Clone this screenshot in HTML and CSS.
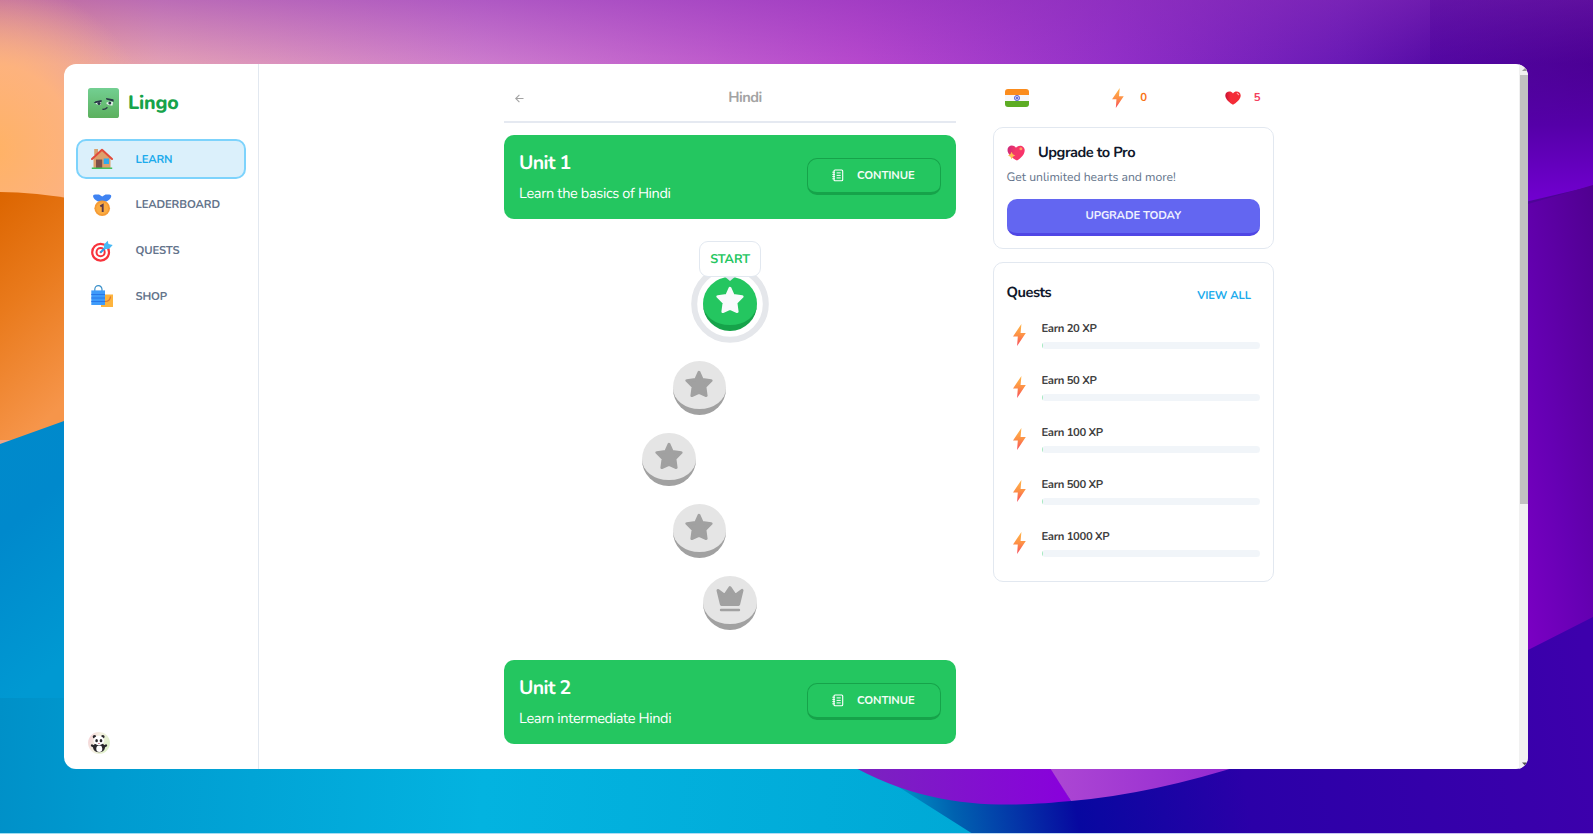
FILE: index.html
```html
<!DOCTYPE html>
<html lang="en">
<head>
<meta charset="utf-8">
<title>Lingo</title>
<link rel="stylesheet" href="styles.css">
</head>
<body>
<svg class="wallpaper" viewBox="0 0 1593 834" preserveAspectRatio="none" aria-hidden="true">
  <defs>
    <linearGradient id="sky"><stop offset="0" stop-color="#f0a585"/><stop offset=".1" stop-color="#e3a0b4"/><stop offset=".3" stop-color="#cd7ccd"/><stop offset=".54" stop-color="#b648cd"/><stop offset=".7" stop-color="#922fc8"/><stop offset=".84" stop-color="#6a1ab6"/><stop offset=".9" stop-color="#560ba6"/><stop offset="1" stop-color="#490090"/></linearGradient>
    <linearGradient id="mist" x2="0" y2="1"><stop offset="0" stop-color="#8b2fb8" stop-opacity=".45"/><stop offset="1" stop-color="#8b2fb8" stop-opacity="0"/></linearGradient>
    <radialGradient id="glow" gradientUnits="userSpaceOnUse" cx="-10" cy="150" r="170"><stop offset="0" stop-color="#ffb264"/><stop offset=".5" stop-color="#ffb47c" stop-opacity=".9"/><stop offset="1" stop-color="#f0ac9c" stop-opacity="0"/></radialGradient>
    <linearGradient id="orange" x1="0" y1="0" x2=".3" y2="1"><stop offset="0" stop-color="#dc6500"/><stop offset=".45" stop-color="#e97a1c"/><stop offset="1" stop-color="#f6954a"/></linearGradient>
    <linearGradient id="sea" gradientUnits="userSpaceOnUse" x1="0" y1="700" x2="973" y2="760"><stop offset="0" stop-color="#0090c8"/><stop offset=".12" stop-color="#009bd0"/><stop offset=".5" stop-color="#03b3e0"/><stop offset="1" stop-color="#00a9d6"/></linearGradient>
    <linearGradient id="seaLeft" x1="0" y1="0" x2=".25" y2="1"><stop offset="0" stop-color="#008acb"/><stop offset=".4" stop-color="#0089cc"/><stop offset="1" stop-color="#0099d2"/></linearGradient>
    <linearGradient id="violet" x2="0" y2="1"><stop offset="0" stop-color="#4b0096" stop-opacity=".3"/><stop offset=".3" stop-color="#4f009c" stop-opacity=".4"/><stop offset=".6" stop-color="#5500a8"/><stop offset="1" stop-color="#7400d4"/></linearGradient>
    <linearGradient id="plum" x1="1" y1="0" x2="0" y2="1"><stop offset="0" stop-color="#500090"/><stop offset=".5" stop-color="#6600b4"/><stop offset="1" stop-color="#8500cb"/></linearGradient>
    <linearGradient id="indigo" gradientUnits="userSpaceOnUse" x1="890" y1="820" x2="1593" y2="700"><stop offset="0" stop-color="#00a0cc"/><stop offset=".09" stop-color="#0062b0"/><stop offset=".26" stop-color="#0708a0"/><stop offset=".5" stop-color="#2b00a8"/><stop offset="1" stop-color="#3d00ac"/></linearGradient>
    <linearGradient id="leafA"><stop offset="0" stop-color="#7926bd"/><stop offset="1" stop-color="#8900dc"/></linearGradient>
    <linearGradient id="leafB"><stop offset="0" stop-color="#ad48d3"/><stop offset="1" stop-color="#9124d1"/></linearGradient>
    <linearGradient id="edge"><stop offset="0" stop-color="#9fdcef"/><stop offset=".6" stop-color="#b9dcf4"/><stop offset="1" stop-color="#cfb4ed"/></linearGradient>
  </defs>
  <rect width="1593" height="834" fill="url(#sky)"/>
  <rect width="1593" height="64" fill="url(#mist)"/>
  <rect width="300" height="320" fill="url(#glow)"/>
  <path d="M1430 0H1593V186L1500 208L1430 150Z" fill="url(#violet)"/>
  <path d="M0 192Q34 192 80 200V440H0Z" fill="url(#orange)"/>
  <path d="M1500 212L1528 204Q1570 192 1593 185V625L1500 665Z" fill="url(#plum)"/>
  <path d="M0 690H1100V834H0Z" fill="url(#sea)"/>
  <path d="M0 444L64 421L80 415V698H0Z" fill="url(#seaLeft)"/>
  <path d="M856 760L973 834H1593V617L1528 650L1240 740Z" fill="url(#indigo)"/>
  <path d="M842 760C930 814 1015 806 1071 801L1047 760Z" fill="url(#leafA)"/>
  <path d="M1045 760L1071 801Q1155 794 1258 760Z" fill="url(#leafB)"/>
  <rect y="833" width="1593" height="1" fill="url(#edge)"/>
</svg>

<svg class="sprites" aria-hidden="true">
  <defs>
    <linearGradient id="boltFill" x2="0" y2="1"><stop offset="0" stop-color="#ffb649"/><stop offset=".5" stop-color="#fd9146"/><stop offset="1" stop-color="#f74a5c"/></linearGradient>
    <symbol id="bolt" viewBox="0 0 13 22"><path d="M8.4 0L0 12.4H4.8L4.1 22L12.8 9.1H7.6Z" fill="url(#boltFill)"/></symbol>
    <symbol id="star" viewBox="0 0 28 28"><path d="M14 2.2L17.3 9.5L26.2 10.6L20 16.8L21.2 25.6L14 22.4L6.8 25.6L8 16.8L1.8 10.6L10.7 9.5Z" fill="currentColor" stroke="currentColor" stroke-width="2.8" stroke-linejoin="round"/></symbol>
    <symbol id="crown" viewBox="0 0 28 28"><path d="M2 5.4L8.8 10.4L14 2.7L19.2 10.4L26 5.4L22.6 19.4H5.4Z" fill="currentColor" stroke="currentColor" stroke-width="3" stroke-linejoin="round"/><path d="M5 25H23" stroke="currentColor" stroke-width="2.4" stroke-linecap="round"/></symbol>
    <symbol id="notebook" viewBox="0 0 12 13"><g fill="none" stroke="#fff" stroke-linecap="round"><rect x="2" y="1" width="8.7" height="10.8" rx="1" stroke-width="1.1"/><path d="M.7 3.2H2.6M.7 5.4H2.6M.7 7.6H2.6M.7 9.8H2.6M5 3.9H8.3M5 6.4H8.3M5 8.9H8.3" stroke-width="1"/></g></symbol>
  </defs>
</svg>

<div class="window">
  <aside class="sidebar">
    <div class="brand">
      <svg class="brand-logo" viewBox="0 0 31 30"><defs><linearGradient id="lg" x2="0" y2="1"><stop offset="0" stop-color="#73cf92"/><stop offset="1" stop-color="#5cb05e"/></linearGradient></defs><rect width="31" height="30" rx="2.6" fill="url(#lg)"/><path d="M7 14.5Q10 12.6 13 13.8L12.7 17H10Q8 16.4 7 14.5Z" fill="#e9f3ee"/><path d="M18 15Q22 12.7 25 14L24.5 17.5Q20 18 18 15Z" fill="#e9f3ee"/><g fill="#293747"><circle cx="11" cy="15.5" r="1.6"/><circle cx="21.8" cy="15" r="1.5"/><path d="M5.7 15L7.5 13.3L13.6 12.1V14L8 15ZM18 10L25.4 11.3L25.8 13.8L18.3 11.6Z"/></g><path d="M15 21.3Q17.2 21.6 19 19.8" fill="none" stroke="#293747" stroke-width="1.4" stroke-linecap="round"/></svg>
      <span class="brand-name">Lingo</span>
    </div>
    <nav class="nav">
      <a class="nav-item active">
        <svg class="nav-icon" viewBox="0 0 22 22"><path d="M3.2 1H7V7H3.2Z" fill="#d9a06d"/><path d="M2.5 10L11 2L19.5 10V20H2.5Z" fill="#dda06c"/><path d="M1 11L11 1.8L21 11" fill="none" stroke="#e04b3c" stroke-width="2" stroke-linecap="round" stroke-linejoin="round"/><path d="M5 11.5H11.2V20H5Z" fill="#7e5049"/><path d="M12.7 10.5H18V16H12.7Z" fill="#2daaf0"/><path d="M.8 19.5H21.2V21H.8Z" fill="#43c05b"/></svg>
        <span>LEARN</span></a>
      <a class="nav-item">
        <svg class="nav-icon" viewBox="0 0 22 22"><path d="M2 2Q2 .4 4 .4H8L11.2 2.6L14.5 .4H18.3Q20.3 .4 20.3 2Q20 5 15.5 7.5H7Q2.3 5 2 2Z" fill="#3f83f2"/><circle cx="11.2" cy="14.2" r="7.8" fill="#f59b35"/><circle cx="11.2" cy="14.2" r="6" fill="#fbac42"/><path d="M9.3 12.4L11.7 10.9V18" fill="none" stroke="#5b3b4b" stroke-width="1.9"/></svg>
        <span>LEADERBOARD</span></a>
      <a class="nav-item">
        <svg class="nav-icon" viewBox="0 0 22 22"><circle cx="9.6" cy="12.2" r="8.4" fill="#fff" stroke="#f8333c" stroke-width="2.2"/><circle cx="9.6" cy="12.2" r="4.1" fill="#fff" stroke="#f8333c" stroke-width="2"/><circle cx="9.6" cy="12.2" r="1" fill="#f8333c"/><path d="M9.5 12.5L16 6" stroke="#2a9fe8" stroke-width="2"/><path d="M12.8 8.8L13 4.5L16.7 .8L17.5 3.9L21.7 5L18.3 8.8L14 9.3Z" fill="#49b9f5"/></svg>
        <span>QUESTS</span></a>
      <a class="nav-item">
        <svg class="nav-icon" viewBox="0 0 22 22"><path d="M3.8 7V4.5A3.6 3.9 0 0 1 11 4.5V7" fill="none" stroke="#398fc9" stroke-width="1.2"/><path d="M14 9.5H22V22H10V20H14Z" fill="#fdb43e"/><path d="M.3 5.4H14V20H.3Z" fill="#3e9bfa"/><path d="M.3 9.5H14M.3 13H14M.3 16.5H14" stroke="#2777e8"/><path d="M14 16.5Q19 16.5 19.5 11.5" fill="none" stroke="#d97536" stroke-width="1.2"/></svg>
        <span>SHOP</span></a>
    </nav>
    <svg class="avatar" viewBox="0 0 22 22"><defs><linearGradient id="av" y2=".4"><stop offset="0" stop-color="#f5ccd4"/><stop offset=".5" stop-color="#f4f0e2"/><stop offset="1" stop-color="#dff0ca"/></linearGradient></defs><circle cx="11" cy="11" r="10.9" fill="url(#av)"/><ellipse cx="11" cy="15.5" rx="6" ry="4.8" fill="#29272b"/><ellipse cx="11.3" cy="16.8" rx="3" ry="3.2" fill="#fff"/><circle cx="6.5" cy="4.7" r="1.8" fill="#29272b"/><circle cx="14.8" cy="4.7" r="1.8" fill="#29272b"/><ellipse cx="10.8" cy="8.5" rx="5.3" ry="4.7" fill="#fff"/><ellipse cx="8.6" cy="8.7" rx="1.3" ry="1.6" fill="#29272b"/><ellipse cx="13" cy="8.7" rx="1.3" ry="1.6" fill="#29272b"/><path d="M9.8 11H12L11 12Z" fill="#a52d4b"/><path d="M4 13.5L7 15M18 13.5L15 15" stroke="#29272b" stroke-width="2.3" stroke-linecap="round"/></svg>
  </aside>

  <main class="main">
    <section class="feed">
      <header class="feed-head">
        <svg class="back" viewBox="0 0 9 9"><path d="M8.5 4.5H.8M4.4 .8L.7 4.5L4.4 8.2" fill="none" stroke="#a3a3a3" stroke-width="1.1"/></svg>
        <h1>Hindi</h1>
      </header>
      <div class="unit">
        <div><h2>Unit 1</h2><p>Learn the basics of Hindi</p></div>
        <button class="continue"><svg><use href="#notebook"/></svg><span>CONTINUE</span></button>
      </div>
      <div class="path">
        <div class="lesson current">
          <svg class="ring" viewBox="0 0 78 78"><circle cx="39" cy="39" r="35.8" fill="none" stroke="#e5e7eb" stroke-width="6"/></svg>
          <div class="disc"><svg><use href="#star"/></svg></div>
          <div class="tip">START</div>
        </div>
        <div class="lesson left-one"><div class="disc"><svg><use href="#star"/></svg></div></div>
        <div class="lesson left-two"><div class="disc"><svg><use href="#star"/></svg></div></div>
        <div class="lesson left-one"><div class="disc"><svg><use href="#star"/></svg></div></div>
        <div class="lesson"><div class="disc"><svg><use href="#crown"/></svg></div></div>
      </div>
      <div class="unit">
        <div><h2>Unit 2</h2><p>Learn intermediate Hindi</p></div>
        <button class="continue"><svg><use href="#notebook"/></svg><span>CONTINUE</span></button>
      </div>
    </section>

    <section class="side">
      <div class="stats">
        <svg class="flag" viewBox="0 0 24 18"><defs><clipPath id="fc"><rect width="24" height="18" rx="3"/></clipPath></defs><g clip-path="url(#fc)"><rect width="24" height="18" fill="#f6f7fa"/><rect width="24" height="6" fill="#fb8c1d"/><rect y="12" width="24" height="6" fill="#5dac24"/></g><circle cx="12" cy="9" r="2.6" fill="#dfe2fb" stroke="#4753cf" stroke-width=".8"/><path d="M9.8 9H14.2M12 6.8V11.2M10.5 7.5L13.5 10.5M13.5 7.5L10.5 10.5" stroke="#4753cf" stroke-width=".4"/><circle cx="12" cy="9" r=".8" fill="#4753cf"/></svg>
        <div class="stat xp"><svg class="bolt-sm"><use href="#bolt"/></svg><span>0</span></div>
        <div class="stat hp"><svg class="heart" viewBox="0 0 16 14"><defs><linearGradient id="hr"><stop offset="0" stop-color="#c70f34"/><stop offset=".35" stop-color="#f52c38"/><stop offset="1" stop-color="#f22c35"/></linearGradient></defs><path d="M8 13.8C5 12 .3 8.4 .3 4.5C.3 1 5.5-1.2 8 2.6C10.5-1.2 15.7 1 15.7 4.5C15.7 8.4 11 12 8 13.8Z" fill="url(#hr)"/><path d="M12.3 2.3L13.6 3.6" stroke="#ff9fa8" stroke-width="1.2" stroke-linecap="round"/></svg><span>5</span></div>
      </div>
      <div class="card pro">
        <div class="pro-title"><svg viewBox="0 0 18 16"><defs><linearGradient id="pk" x2="1" y2=".2"><stop offset="0" stop-color="#c9277c"/><stop offset=".5" stop-color="#f43768"/><stop offset="1" stop-color="#f9336a"/></linearGradient></defs><path d="M10 15.6C6 13.5 .5 9.5 .5 5C.5 .7 6-1.2 9 2.8C12-1.2 17.7 .8 17.7 5.2C17.7 9.5 13.5 13.5 10 15.6Z" fill="url(#pk)"/><path d="M4.6 6.8L5.8 9.2L8.2 10.5L5.8 11.8L4.6 14.2L3.4 11.8L1 10.5L3.4 9.2Z" fill="#ffbd52"/><circle cx="13.9" cy="3.8" r="1.5" fill="#ff9b65"/></svg><h3>Upgrade to Pro</h3></div>
        <p>Get unlimited hearts and more!</p>
        <button class="upgrade">UPGRADE TODAY</button>
      </div>
      <div class="card quests">
        <div class="quests-head"><h3>Quests</h3><a>VIEW ALL</a></div>
        <div class="quest"><svg><use href="#bolt"/></svg><div><span>Earn 20 XP</span><div class="bar"></div></div></div>
        <div class="quest"><svg><use href="#bolt"/></svg><div><span>Earn 50 XP</span><div class="bar"></div></div></div>
        <div class="quest"><svg><use href="#bolt"/></svg><div><span>Earn 100 XP</span><div class="bar"></div></div></div>
        <div class="quest"><svg><use href="#bolt"/></svg><div><span>Earn 500 XP</span><div class="bar"></div></div></div>
        <div class="quest"><svg><use href="#bolt"/></svg><div><span>Earn 1000 XP</span><div class="bar"></div></div></div>
      </div>
    </section>
  </main>
  <div class="scrollbar">
    <svg viewBox="0 0 9 11"><path d="M3 7L6.5 3.5L9 7Z" fill="#999"/></svg>
    <div class="thumb"></div>
    <svg class="down" viewBox="0 0 9 11"><path d="M3 4.5H9L6.5 8Z" fill="#505050"/></svg>
  </div>
</div>
</body>
</html>
```
FILE: styles.css
```css
* { box-sizing: border-box; }
html, body { height: 100%; }
body {
  margin: 0;
  padding: 64px 65px 65px 64px;
  overflow: hidden;
  font-family: Nunito, Lato, sans-serif;
  text-rendering: geometricPrecision;
  color: #0f172a;
}
h1, h2, h3, p { margin: 0; }
svg { display: block; flex: none; }
button { font: inherit; cursor: pointer; }
.wallpaper { position: absolute; left: 0; top: 0; width: 1593px; height: 834px; z-index: -1; }
.sprites { position: absolute; width: 0; height: 0; }

.window { display: flex; height: 705px; background: #fff; border-radius: 12px; overflow: hidden; }

.sidebar { display: flex; flex-direction: column; width: 195px; flex: none; border-right: 1.5px solid #e2e8f0; padding: 24px 12px 15px; }
.brand { display: flex; align-items: center; gap: 9px; padding-left: 12px; height: 30px; }
.brand-logo { width: 31px; height: 30px; }
.brand-name { color: #16a34a; font-size: 19.5px; font-weight: 800; line-height: 30px; letter-spacing: -.2px; }
.nav { display: flex; flex-direction: column; gap: 5.8px; margin-top: 21px; }
.nav-item { display: flex; align-items: center; gap: 23px; height: 40px; padding-left: 12.5px; border: 2px solid transparent; border-radius: 10px; color: #64748b; font-size: 11.3px; font-weight: 700; letter-spacing: -.12px; }
.nav-item.active { background: #dbf0fb; border-color: #7dd3fc; color: #1cabec; width: 170px; }
.nav-icon { width: 22px; height: 22px; }
.avatar { width: 22px; height: 22px; margin: auto 0 0 12px; }

.main { display: flex; flex: 1; gap: 37px; padding: 0 0 0 245px; align-items: flex-start; }
.feed { width: 452px; flex: none; }
.feed-head { display: flex; align-items: center; height: 59px; padding: 11px 0 0 11px; border-bottom: 2px solid #e5e9f1; margin-bottom: 12px; }
.back { width: 9px; height: 9px; }
.feed-head h1 { flex: 1; margin-left: 10px; text-align: center; color: #a3a3a3; font-size: 14.6px; line-height: 20px; font-weight: 700; letter-spacing: -.5px; }
.unit { display: flex; justify-content: space-between; align-items: center; height: 84px; padding: 0 15px; border-radius: 10px; background: #24c660; color: #fff; }
.unit h2 { font-size: 19.5px; line-height: 26px; font-weight: 700; letter-spacing: -.6px; margin-top: -1px; }
.unit p { font-size: 14.5px; line-height: 20px; margin-top: 8px; white-space: nowrap; letter-spacing: -.34px; }
.continue { display: flex; align-items: center; gap: 13px; width: 134px; height: 37px; margin-top: -1px; padding: 0 0 0 24px; border: 1.6px solid #16a34a; border-bottom-width: 3.2px; border-radius: 10px; background: none; color: #f3fdf6; font-size: 11.3px; font-weight: 700; letter-spacing: -.12px; }
.continue svg { width: 12px; height: 13px; }

.path { display: flex; flex-direction: column; align-items: center; gap: 18px; height: 441px; padding-top: 58px; }
.lesson { position: relative; width: 53.8px; height: 53.8px; flex: none; }
.left-one { margin-right: 61px; }
.left-two { margin-right: 122px; }
.current { margin-bottom: 12px; }
.disc { display: flex; justify-content: center; width: 53.8px; height: 53.8px; padding-top: 9px; border-radius: 50%; background: #e5e5e5; border-bottom: 6px solid #a1a1a1; color: #a1a1a1; }
.disc svg { width: 28px; height: 28px; }
.current .disc { background: #24c660; border-color: #16a34a; color: #f8fafc; }
.ring { position: absolute; left: -12px; top: -12px; width: 78px; height: 78px; }
.tip { position: absolute; left: -4px; top: -36px; width: 62px; height: 36px; border: 1.6px solid #e2e8f0; border-radius: 9px; background: #fff; color: #24c660; font-size: 12.6px; font-weight: 700; line-height: 35px; letter-spacing: -.05px; text-align: center; }
.tip::after { content: ""; position: absolute; left: 24px; top: 34px; border: 6px solid transparent; border-bottom: 0; border-top: 5px solid #e2e8f0; }

.side { width: 280.5px; }
.stats { display: flex; align-items: center; justify-content: space-between; height: 63px; padding: 5px 13px 0 12px; }
.flag { width: 24px; height: 18px; }
.stat { display: flex; align-items: center; font-size: 11.4px; font-weight: 700; }
.xp { gap: 16.5px; color: #f97316; margin-left: 5px; }
.bolt-sm { width: 12px; height: 20px; }
.hp { gap: 13px; color: #f43f5e; }
.heart { width: 16px; height: 14px; }
.card { border: 1.6px solid #e2e8f0; border-radius: 10px; padding: 0 12.5px; }
.pro { height: 122px; margin-bottom: 13px; }
.pro-title { display: flex; align-items: center; gap: 13.5px; padding-top: 14px; height: 35px; }
.pro-title svg { width: 18px; height: 16px; }
.card h3 { font-size: 14.6px; line-height: 20px; font-weight: 700; letter-spacing: -.48px; }
.pro p { color: #64748b; font-size: 12.2px; line-height: 18px; margin-top: 6px; }
.upgrade { display: block; width: 100%; height: 37px; margin-top: 12px; padding: 0 0 2px; border: 0; border-bottom: 3.2px solid #4f46e5; border-radius: 10px; background: #6366f1; color: #eef0ff; font-size: 11.3px; font-weight: 700; letter-spacing: -.1px; }
.quests { height: 320px; }
.quests-head { display: flex; justify-content: space-between; align-items: flex-start; height: 56px; padding: 20px 9px 0 0; }
.quests-head a { color: #1cabec; font-size: 11.3px; line-height: 25px; font-weight: 700; letter-spacing: -.12px; }
.quest { display: flex; align-items: center; gap: 16px; height: 32px; margin-bottom: 20px; padding-left: 6px; }
.quest svg { width: 13px; height: 22px; }
.quest > div { flex: 1; }
.quest span { display: block; color: #404040; font-size: 11.3px; line-height: 16px; font-weight: 700; margin-bottom: 5px; letter-spacing: -.36px; }
.bar { height: 6.5px; border-radius: 4px; background: linear-gradient(90deg, #a6e9c1 1px, #f1f5f9 1px); }

.scrollbar { display: flex; flex-direction: column; width: 9.5px; flex: none; background: #f1f1f1; }
.scrollbar svg { width: 9px; height: 11px; }
.thumb { height: 429px; margin-left: 1.5px; background: #c1c1c1; }
.scrollbar .down { margin-top: auto; }
```
